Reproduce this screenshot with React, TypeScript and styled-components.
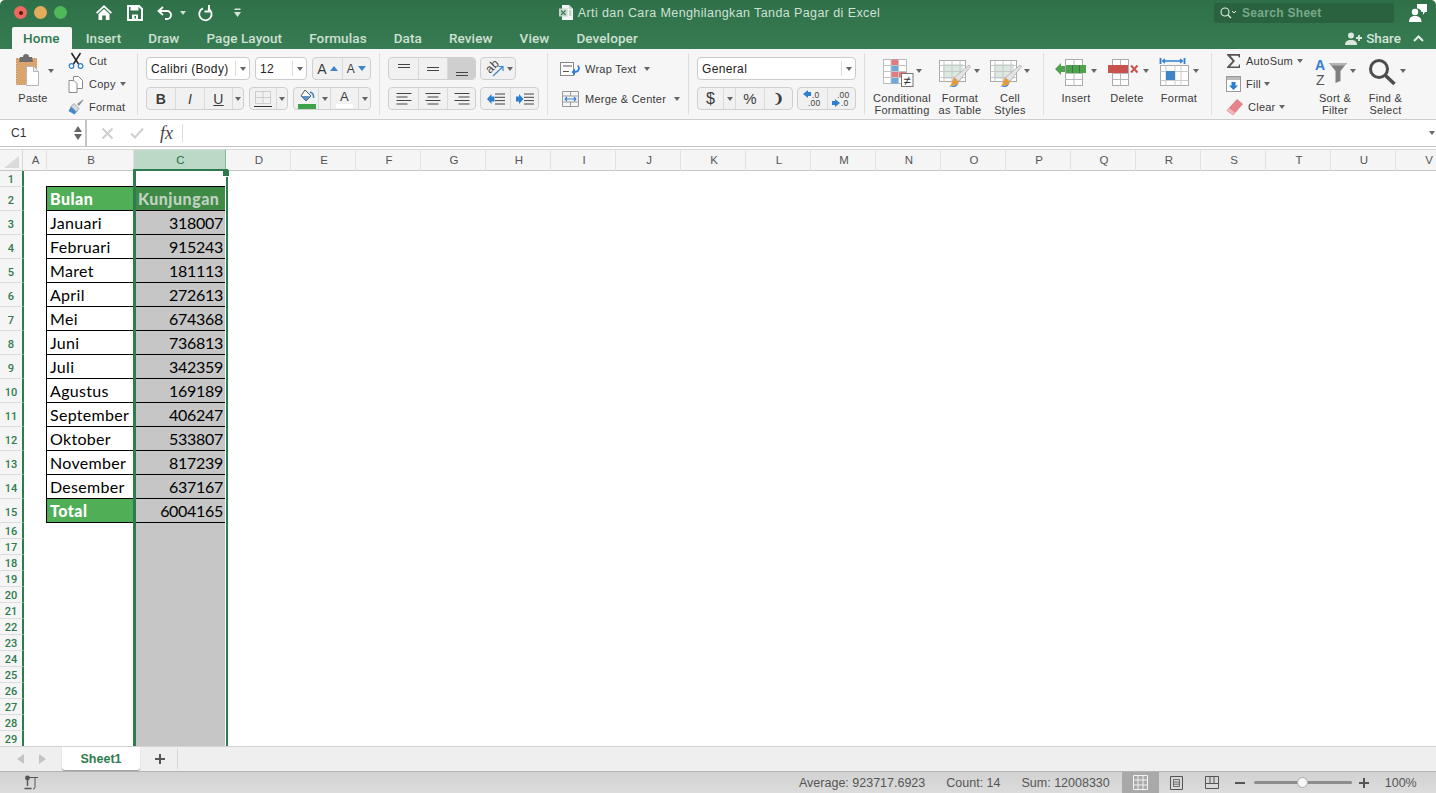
import React from 'react';
import styled, { createGlobalStyle } from 'styled-components';

const GlobalStyle = createGlobalStyle`
  html, body { margin: 0; padding: 0; background: #fff; overflow: hidden; }
  * { box-sizing: border-box; }
  body { font-family: "Liberation Sans", Arial, sans-serif; }
`;

const Page = styled.div`
  width: 1436px;
  height: 793px;
  display: flex;
  flex-direction: column;
  overflow: hidden;
`;

/* ---------- green header ---------- */

const Header = styled.header`
  height: 49px;
  background: linear-gradient(#2f7049, #377c52);
  border-radius: 5px 5px 0 0;
`;

const TitleRow = styled.div`
  height: 25px;
  display: grid;
  grid-template-columns: 1fr auto 1fr;
  align-items: center;
`;

const QuickBar = styled.div`
  display: flex;
  align-items: center;
  padding-left: 14px;
`;

const QuickGap = styled.span<{ $w: number }>`
  width: ${p => p.$w}px;
  flex: none;
`;

const Light = styled.span<{ $c: string }>`
  width: 13px;
  height: 13px;
  border-radius: 50%;
  margin-right: 7px;
  background: ${p => p.$c};
  display: flex;
  align-items: center;
  justify-content: center;
`;

const LightDot = styled.span`
  width: 4px;
  height: 4px;
  border-radius: 50%;
  background: #5a1512;
`;

const Title = styled.div`
  display: flex;
  align-items: center;
  gap: 5px;
  color: #cfe0d5;
  font-size: 12.5px;
  letter-spacing: 0.4px;
  padding-left: 3px;
`;

const TitleRight = styled.div`
  display: flex;
  justify-content: flex-end;
  align-items: center;
  padding-right: 9px;
`;

const SearchBox = styled.div`
  width: 180px;
  height: 20px;
  background: #2a6240;
  border-radius: 3px;
  display: flex;
  align-items: center;
  gap: 5px;
  padding-left: 6px;
  margin-right: 15px;
  color: #77a98a;
  font-size: 12px;
  font-weight: 700;
  letter-spacing: 0.3px;
`;

const TabRow = styled.nav`
  height: 24px;
  display: flex;
  align-items: flex-end;
  padding-left: 12px;
`;

const Tab = styled.div<{ $active?: boolean }>`
  height: 22px;
  padding: 0 ${p => (p.$active ? 12 : 13)}px 0 ${p => (p.$active ? 11 : 14)}px;
  display: flex;
  align-items: center;
  font-family: Roboto, sans-serif;
  font-size: 13.5px;
  font-weight: 500;
  letter-spacing: 0.1px;
  color: ${p => (p.$active ? '#2b7a4d' : '#cfe0d5')};
  background: ${p => (p.$active ? '#f6f6f6' : 'transparent')};
  border-radius: 2px 2px 0 0;
`;

const ShareBox = styled.div`
  margin-left: auto;
  height: 22px;
  display: flex;
  align-items: center;
  gap: 4px;
  padding-right: 12px;
  color: #d5e4da;
  font-family: Roboto, sans-serif;
  font-size: 13.5px;
  font-weight: 500;
`;

/* ---------- ribbon ---------- */

const Ribbon = styled.div`
  height: 71px;
  display: flex;
  background: #f6f6f6;
  border-bottom: 1px solid #cdcdcd;
  color: #3a3a3a;
  font-size: 11px;
  letter-spacing: 0.25px;
`;

const Divider = styled.div`
  width: 1px;
  height: 62px;
  margin-top: 4px;
  background: #dedede;
  flex: none;
`;

const Section = styled.section<{ $w: number; $pl?: number }>`
  width: ${p => p.$w}px;
  flex: none;
  display: flex;
  padding-left: ${p => p.$pl ?? 0}px;
`;

const Stack = styled.div`
  display: flex;
  flex-direction: column;
  gap: 7px;
  padding-top: 8px;
`;

const Line = styled.div<{ $gap?: number }>`
  display: flex;
  gap: ${p => p.$gap ?? 5}px;
  height: 23px;
`;

const Big = styled.div<{ $w: number }>`
  width: ${p => p.$w}px;
  flex: none;
  display: flex;
  flex-direction: column;
  align-items: center;
  text-align: center;
  line-height: 12px;
  white-space: nowrap;
`;

const PasteBox = styled.div`
  align-self: flex-start;
  height: 43px;
  padding-top: 5px;
`;

const BigIcon = styled.svg`
  display: block;
  flex: none;
  overflow: visible;
`;

const SmallList = styled.div<{ $w: number; $ml?: number }>`
  width: ${p => p.$w}px;
  margin-left: ${p => p.$ml ?? 0}px;
  flex: none;
  display: flex;
  flex-direction: column;
  gap: 7px;
  padding-top: 4px;
`;

const SmallRow = styled.div`
  height: 16px;
  display: flex;
  align-items: center;
  gap: 5px;
  white-space: nowrap;
`;

const Caret = styled.span<{ $ml?: number; $light?: boolean }>`
  width: 0;
  height: 0;
  flex: none;
  margin-left: ${p => p.$ml ?? 0}px;
  border-left: 3px solid transparent;
  border-right: 3px solid transparent;
  border-top: 4px solid ${p => (p.$light ? '#cfe0d5' : '#666')};
`;

const Select = styled.div<{ $w: number }>`
  width: ${p => p.$w}px;
  height: 23px;
  display: flex;
  align-items: center;
  background: #fff;
  border: 1px solid #cbcbcb;
  border-radius: 4px;
  font-size: 12px;
  letter-spacing: 0.35px;
  color: #222;
  padding-left: 4px;
`;

const SelectText = styled.span`
  flex: 1;
  white-space: nowrap;
`;

const SelectArrow = styled.span`
  width: 14px;
  height: 15px;
  border-left: 1px solid #ddd;
  display: flex;
  align-items: center;
  justify-content: center;
`;

const Group = styled.div`
  display: flex;
  height: 23px;
  border: 1px solid #cfcfcf;
  border-radius: 4px;
  background: #f1f1f1;
  overflow: hidden;
`;

const Btn = styled.div<{ $w: number; $on?: boolean }>`
  width: ${p => p.$w}px;
  flex: none;
  display: flex;
  align-items: center;
  justify-content: center;
  gap: 3px;
  color: #333;
  background: ${p => (p.$on ? '#cfcfcf' : 'transparent')};
  & + & { border-left: 1px solid #dadada; }
`;

const Glyph = styled.span<{ $s?: number; $b?: boolean; $i?: boolean; $u?: boolean }>`
  font-size: ${p => p.$s ?? 13}px;
  font-weight: ${p => (p.$b ? 700 : 400)};
  font-style: ${p => (p.$i ? 'italic' : 'normal')};
  text-decoration: ${p => (p.$u ? 'underline' : 'none')};
  line-height: 1;
  color: #3c3c3c;
`;

const ColorGlyph = styled.span`
  display: flex;
  flex-direction: column;
  align-items: center;
  gap: 1px;
`;

const ColorBar = styled.span`
  width: 17px;
  height: 4px;
  background: #fff;
`;

const TinyUp = styled.span<{ $down?: boolean }>`
  width: 0;
  height: 0;
  border-left: 4px solid transparent;
  border-right: 4px solid transparent;
  ${p => (p.$down ? 'border-top: 5px solid #3d85c6;' : 'border-bottom: 5px solid #3d85c6;')}
`;

const WrapList = styled.div`
  display: flex;
  flex-direction: column;
  gap: 14px;
  padding-top: 12px;
`;

const WrapRow = styled.div<{ $inset?: number; $gap?: number }>`
  display: flex;
  align-items: center;
  gap: ${p => p.$gap ?? 4}px;
  height: 16px;
  padding-left: ${p => p.$inset ?? 0}px;
  white-space: nowrap;
`;

/* ---------- formula bar ---------- */

const FormulaBar = styled.div`
  height: 27px;
  display: flex;
  align-items: center;
  background: #fff;
  border-bottom: 1px solid #c4c4c4;
  margin-bottom: 2px;
`;

const NameBox = styled.div`
  width: 87px;
  height: 26px;
  padding: 0 3px 0 11px;
  display: flex;
  align-items: center;
  justify-content: space-between;
  border-right: 2px solid #c4c4c4;
  font-size: 12px;
  color: #333;
`;

const Stepper = styled.div`
  display: flex;
  flex-direction: column;
  gap: 2px;
`;

const StepArrow = styled.span<{ $down?: boolean }>`
  width: 0;
  height: 0;
  border-left: 4px solid transparent;
  border-right: 4px solid transparent;
  ${p => (p.$down ? 'border-top: 6px solid #666;' : 'border-bottom: 6px solid #666;')}
`;

const FormulaTools = styled.div`
  width: 96px;
  height: 18px;
  display: flex;
  align-items: center;
  gap: 16px;
  padding-left: 14px;
  border-right: 1px solid #ddd;
`;

const Fx = styled.span`
  font-family: "Liberation Serif", serif;
  font-style: italic;
  font-size: 18px;
  color: #444;
`;

const FormulaInput = styled.div`
  flex: 1;
  display: flex;
  justify-content: flex-end;
  padding-right: 1px;
`;

/* ---------- sheet ---------- */

const Sheet = styled.div`
  height: 597px;
  display: grid;
  grid-template-columns: 23px 24px 87px 92px repeat(19, 65px);
  grid-template-rows: 22px 16px repeat(14, 24px) repeat(14, 16px);
  overflow: hidden;
  background: #fff;
  font-family: Lato, Carlito, sans-serif;
`;

const Corner = styled.div`
  background: #f5f5f5;
  border-top: 1px solid #d8d8d8;
  border-bottom: 1px solid #c8c8c8;
  border-right: 1px solid #d8d8d8;
  display: flex;
  align-items: flex-end;
  justify-content: center;
  padding-bottom: 2px;
`;

const ColHead = styled.div<{ $on?: boolean }>`
  background: ${p => (p.$on ? '#bcd9c8' : '#f5f5f5')};
  border-top: 1px solid #d8d8d8;
  border-bottom: 1px solid ${p => (p.$on ? '#2e7b4f' : '#c8c8c8')};
  border-right: 1px solid ${p => (p.$on ? '#7fbf96' : '#e2e2e2')};
  padding-left: 2px;
  display: flex;
  align-items: center;
  justify-content: center;
  font-family: "Liberation Sans", sans-serif;
  font-size: 11.5px;
  color: ${p => (p.$on ? '#1f6b41' : '#555')};
`;

const RowHead = styled.div<{ $r: number; $tall?: boolean }>`
  grid-column: 1;
  grid-row: ${p => p.$r};
  margin-right: -1px;
  position: relative;
  z-index: 1;
  background: #f5f5f5;
  border-bottom: 1px solid #dcdcdc;
  border-right: 2px solid #2e7b4f;
  display: flex;
  align-items: center;
  justify-content: center;
  padding-top: ${p => (p.$tall ? 4 : 1)}px;
  font-family: Roboto, sans-serif;
  font-weight: 500;
  font-size: 11px;
  color: #2e7b4f;
`;

const NameCell = styled.div<{ $r: number; $fill?: boolean; $top?: boolean }>`
  grid-column: 3;
  grid-row: ${p => p.$r};
  margin-left: -1px;
  margin-top: ${p => (p.$top ? -1 : 0)}px;
  border-left: 1px solid #000;
  border-bottom: 1px solid #000;
  border-top: ${p => (p.$top ? '1px solid #000' : 'none')};
  background: ${p => (p.$fill ? '#4fae56' : '#fff')};
  color: ${p => (p.$fill ? '#fff' : '#000')};
  font-weight: ${p => (p.$fill ? 900 : 400)};
  font-size: 16px;
  letter-spacing: ${p => (p.$fill ? '0.5px' : '0.3px')};
  padding-left: 3px;
  display: flex;
  align-items: center;
  white-space: nowrap;
`;

const ValueCell = styled.div<{ $r: number; $kind?: 'head' | 'line' | 'blank' | 'active' }>`
  grid-column: 4;
  grid-row: ${p => p.$r};
  margin: ${p => (p.$kind === 'head' ? '-1px' : '0')} 1px 0 0;
  background: ${p => (p.$kind === 'head' ? '#3f8a45' : p.$kind === 'active' ? '#fff' : '#c6c6c6')};
  color: ${p => (p.$kind === 'head' ? '#bfd2c1' : '#000')};
  font-weight: ${p => (p.$kind === 'head' ? 900 : 400)};
  border-bottom: ${p => (p.$kind === 'blank' || p.$kind === 'active' ? 'none' : '1px solid #000')};
  border-top: ${p => (p.$kind === 'head' ? '1px solid #000' : 'none')};
  font-size: 16px;
  letter-spacing: ${p => (p.$kind === 'head' ? '0.5px' : '-0.3px')};
  padding: 0 2px 0 4px;
  display: flex;
  align-items: center;
  justify-content: ${p => (p.$kind === 'head' ? 'flex-start' : 'flex-end')};
  white-space: nowrap;
`;

const SelectionFrame = styled.div`
  grid-column: 4;
  grid-row: 2 / 31;
  position: relative;
  z-index: 2;
  margin: -2px -2px 0 -1px;
  border: solid #2e7b4f;
  border-width: 2px 2px 0 3px;
  pointer-events: none;
`;

const FillHandle = styled.span`
  position: absolute;
  top: -1px;
  right: -3px;
  width: 6px;
  height: 7px;
  background: #2e7b4f;
  border-bottom: 1px solid #fff;
`;

/* ---------- tabs + status ---------- */

const SheetTabs = styled.div`
  height: 26px;
  display: flex;
  align-items: flex-start;
  background: #efefef;
  border-top: 1px solid #d2d2d2;
  border-bottom: 1px solid #b4b4b4;
`;

const NavArrows = styled.div`
  width: 62px;
  height: 24px;
  display: flex;
  align-items: center;
  gap: 15px;
  padding-left: 17px;
`;

const NavArrow = styled.span<{ $right?: boolean }>`
  width: 0;
  height: 0;
  border-top: 5px solid transparent;
  border-bottom: 5px solid transparent;
  ${p => (p.$right ? 'border-left: 7px solid #c4c4c4;' : 'border-right: 7px solid #c4c4c4;')}
`;

const SheetTab = styled.div`
  width: 78px;
  height: 23px;
  padding-top: 1px;
  background: #fff;
  border-radius: 0 0 3px 3px;
  box-shadow: 0 1px 1px #999;
  display: flex;
  align-items: center;
  justify-content: center;
  color: #2e7b4f;
  font-size: 12.5px;
  font-weight: 700;
`;

const AddSheet = styled.div`
  width: 38px;
  height: 21px;
  margin-top: 1px;
  padding-left: 2px;
  border-right: 1px solid #d8d8d8;
  display: flex;
  align-items: center;
  justify-content: center;
  color: #555;
`;

const StatusBar = styled.footer`
  height: 21px;
  display: flex;
  align-items: center;
  background: linear-gradient(#d2d2d2, #dcdcdc);
  font-size: 12.5px;
  color: #555;
  padding-left: 24px;
`;

const StatusText = styled.span<{ $ml?: number }>`
  margin-left: ${p => p.$ml ?? 0}px;
  white-space: nowrap;
`;

const ViewBtn = styled.div<{ $on?: boolean; $w: number; $mr?: number }>`
  width: ${p => p.$w}px;
  height: 21px;
  margin-right: ${p => p.$mr ?? 0}px;
  display: flex;
  align-items: center;
  justify-content: center;
  background: ${p => (p.$on ? '#a9a9a9' : 'transparent')};
`;

const Slider = styled.div`
  width: 98px;
  height: 3px;
  margin: 0 7px 0 9px;
  background: #8d8d8d;
  border-radius: 2px;
  display: flex;
  align-items: center;
  justify-content: center;
`;

const SliderThumb = styled.span`
  width: 11px;
  height: 11px;
  border-radius: 50%;
  background: #f7f7f7;
  border: 1px solid #aaa;
`;

/* ---------- icons ---------- */

const Svg = ({ w, h, children }: { w: number; h: number; children: React.ReactNode }) => (
  <BigIcon width={w} height={h} viewBox={`0 0 ${w} ${h}`}>{children}</BigIcon>
);

const DropTri = ({ x, y = 22 }: { x: number; y?: number }) => (
  <path d={`M${x - 3} ${y - 2}h6l-3 4z`} fill="#666" />
);

const HomeIcon = () => (
  <Svg w={18} h={17}>
    <path d="M9 1 1 8.500l1.200 1.200L9 3.400l6.800 6.300L17 8.500z" fill="#fff" />
    <path d="M3.500 10 9 5l5.500 5v6h-3.700v-4.500H7.200V16H3.500z" fill="#fff" />
  </Svg>
);

const SaveIcon = () => (
  <Svg w={16} h={16}>
    <path d="M1 1h11l3 3v11H1z" fill="none" stroke="#fff" strokeWidth="2" />
    <rect x="3.500" y="1.500" width="8" height="4" fill="#fff" />
    <rect x="5" y="9.500" width="6" height="5" fill="#fff" />
    <rect x="7.500" y="11" width="1.500" height="2.500" fill="#2f7049" />
  </Svg>
);

const UndoIcon = () => (
  <Svg w={16} h={14}>
    <path d="M6 1 1.500 5 6 9" fill="none" stroke="#fff" strokeWidth="1.800" />
    <path d="M2 5h8a4 4 0 0 1 0 8H8" fill="none" stroke="#fff" strokeWidth="1.800" />
  </Svg>
);

const RedoIcon = () => (
  <Svg w={16} h={16}>
    <path d="M5 3.400a6.200 6.200 0 1 0 5 .1" fill="none" stroke="#fff" strokeWidth="1.800" />
    <path d="M11 0v6.500H6.500" fill="none" stroke="#fff" strokeWidth="1.800" />
  </Svg>
);

const CustomizeIcon = () => (
  <Svg w={9} h={10}>
    <rect x="1.500" y="0.500" width="6" height="1.500" fill="#d5e4da" />
    <path d="M1 4h7L4.500 9z" fill="#d5e4da" />
  </Svg>
);

const ExcelDoc = () => (
  <Svg w={14} h={15}>
    <path d="M3 0h7l4 4v11H3z" fill="#f3f6f4" />
    <path d="M10 0v4h4z" fill="#c5d4ca" />
    <rect x="0" y="3.500" width="8.500" height="8" fill="#c7d6cc" />
    <path d="M2 5.500 6.500 10M6.500 5.500 2 10" stroke="#3f7f58" strokeWidth="1.200" />
    <path d="M10 6h2.500M10 8h2.500M10 10h2.500" stroke="#9db3a5" />
  </Svg>
);

const SearchIcon = () => (
  <Svg w={17} h={12}>
    <circle cx="5" cy="5" r="4" fill="none" stroke="#e3eee7" strokeWidth="1.100" />
    <path d="m8 8 3 3" stroke="#e3eee7" strokeWidth="1.200" />
    <path d="m12 4 2 2 2-2" fill="none" stroke="#e3eee7" />
  </Svg>
);

const CommentPerson = () => (
  <Svg w={18} h={18}>
    <path d="M8 0h10v8h-2l-2 3V8h-1.500A5 5 0 0 0 8 4.500z" fill="#fff" />
    <circle cx="6" cy="8" r="3.200" fill="#fff" />
    <path d="M0 18c0-4 2-6 6-6s6.500 2 6.500 6z" fill="#fff" />
  </Svg>
);

const ShareIcon = () => (
  <Svg w={17} h={13}>
    <circle cx="6" cy="3.500" r="3" fill="#dbe7df" />
    <path d="M0 13c0-3.500 2-5 6-5s6 1.500 6 5z" fill="#dbe7df" />
    <path d="M14 3v6M11 6h6" stroke="#dbe7df" strokeWidth="1.800" />
  </Svg>
);

const ChevronUp = () => (
  <Svg w={11} h={7}>
    <path d="m1 6 4.500-4.500L10 6" fill="none" stroke="#e6efe9" strokeWidth="2" />
  </Svg>
);

const PasteIcon = () => (
  <Svg w={44} h={34}>
    <rect x="2.500" y="4.500" width="20" height="26" fill="#d9a56c" stroke="#c98a4d" strokeDasharray="1.500 1" />
    <path d="M6 3h3a3 3 0 0 1 6 0h3l1 5H5z" fill="#6d6d6d" />
    <path d="M12.500 12.500h7l5 5v14h-12z" fill="#fff" stroke="#b5b5b5" />
    <path d="M19.500 12.500v5h5" fill="#eee" stroke="#b5b5b5" />
    <DropTri x={37} y={17} />
  </Svg>
);

const CutIcon = () => (
  <Svg w={16} h={16}>
    <path d="m3.500 0 7 11M12.500 0l-7 11" stroke="#222" strokeWidth="1.500" />
    <circle cx="3.500" cy="13" r="2.300" fill="none" stroke="#2f7fd0" strokeWidth="1.200" />
    <circle cx="12.500" cy="13" r="2.300" fill="none" stroke="#2f7fd0" strokeWidth="1.200" />
  </Svg>
);

const CopyIcon = () => (
  <Svg w={16} h={17}>
    <path d="M5.500.5h5l4 4v8h-9z" fill="#fff" stroke="#8a8a8a" />
    <path d="M1 4.500h5l3 3v9H1z" fill="#fff" stroke="#8a8a8a" />
  </Svg>
);

const BrushIcon = () => (
  <Svg w={16} h={16}>
    <path d="M9 5 15 .5l.5.5-4.500 6z" fill="#8a8f96" />
    <path d="M6 4.500 11 9.500 8.500 13 3 7.500z" fill="#d7dbe0" stroke="#77808a" strokeWidth=".6" />
    <path d="M3 7.500 8.500 13l-2 2.500L.5 12z" fill="#4a86c5" />
  </Svg>
);

const BorderIcon = () => (
  <Svg w={18} h={18}>
    <path d="M1.500 1.500h15v12h-15zM9 1.500v12M1.500 7.500h15" fill="none" stroke="#aaa" strokeDasharray="1 1" />
    <path d="M0 16.500h18" stroke="#333" strokeWidth="1.200" />
  </Svg>
);

const FillIcon = () => (
  <Svg w={19} h={20}>
    <path d="m8 1 6 6-5 5-5-5z" fill="#fff" stroke="#555" />
    <path d="M4 7h9l-4 5z" fill="#5d8fc4" />
    <path d="M13 3c3 1 4 3 3.500 6" fill="none" stroke="#3d85c6" strokeWidth="1.500" />
    <rect x="1" y="15" width="18" height="5" fill="#3fa14a" />
  </Svg>
);

const AlignV = ({ y }: { y: number }) => (
  <Svg w={16} h={16}>
    <path d={`M2 ${y}.5h12M2 ${y + 3}.5h12`} stroke="#444" strokeWidth="1" />
  </Svg>
);

const AlignH = ({ mode }: { mode: 'l' | 'c' | 'r' }) => {
  const rows = [15, 11, 15, 11];
  return (
    <Svg w={16} h={14}>
      {rows.map((w, i) => {
        const x = mode === 'l' ? 0.5 : mode === 'r' ? 15.5 - w : 8 - w / 2;
        return <path key={i} d={`M${x} ${1.5 + i * 3.5}h${w}`} stroke="#444" strokeWidth="1" />;
      })}
    </Svg>
  );
};

const OrientIcon = () => (
  <Svg w={20} h={20}>
    <text x="8.500" y="11" textAnchor="middle" fontSize="12" fill="#444" fontFamily="Liberation Sans" transform="rotate(-45 8.500 7.500)">ab</text>
    <path d="M9 17 19 7.500M14.500 7.500H19V12" fill="none" stroke="#3d85c6" strokeWidth="1.200" />
  </Svg>
);

const IndentIcon = ({ right }: { right?: boolean }) => (
  <Svg w={18} h={12}>
    <path d="M8 1h10M8 4.300h10M8 7.600h10M8 11h10" stroke="#444" />
    <path d={right ? 'M0 3.500h3V1l4.500 5L3 11V8.500H0z' : 'M7.500 3.500h-3V1L0 6l4.500 5V8.500h3z'} fill="#2f7fd0" />
  </Svg>
);

const WrapIcon = () => (
  <Svg w={21} h={14}>
    <rect x=".5" y=".5" width="13" height="13" fill="#fff" stroke="#888" />
    <path d="M3 4h9M3 9.500h6" stroke="#555" />
    <path d="M18 3.500c2 3 1 6.500-4 6.500" fill="none" stroke="#2f7fd0" strokeWidth="1.800" />
    <path d="m15 6.500-3.500 3.500 3.500 3.500z" fill="#2f7fd0" />
  </Svg>
);

const MergeIcon = () => (
  <Svg w={17} h={16}>
    <path d="M.5.500h16v15H.5zM.5 5h16M.5 11h16M8.500.500V5M8.500 11v4.500" fill="none" stroke="#999" />
    <path d="M3 8h11M5 6 3 8l2 2M12 6l2 2-2 2" fill="none" stroke="#2f7fd0" strokeWidth="1.100" />
  </Svg>
);

const DecIcon = ({ more }: { more?: boolean }) => (
  <Svg w={20} h={18}>
    <text x={more ? 9 : 5} y="8" fontSize="8.500" fill="#444" fontFamily="Liberation Sans">{more ? '.0' : '.00'}</text>
    <text x={more ? 5 : 9} y="16" fontSize="8.500" fill="#444" fontFamily="Liberation Sans">{more ? '.00' : '.0'}</text>
    {more
      ? <path d="M8 2h-3V0L0 4l5 4V6h3z" fill="#2f7fd0" />
      : <path d="M0 11h3V9l5 4-5 4v-2H0z" fill="#2f7fd0" />}
  </Svg>
);

const CondIcon = () => (
  <Svg w={74} h={43}>
    <rect x="18.500" y="10.500" width="23" height="24" fill="#fff" stroke="#bbb" />
    <rect x="26" y="10.500" width="7.500" height="6" fill="#e27a80" />
    <rect x="26" y="16.500" width="8" height="6" fill="#6fa8dc" />
    <rect x="26" y="22.500" width="15" height="6" fill="#e27a80" />
    <rect x="26" y="28.500" width="7.500" height="6" fill="#6fa8dc" />
    <path d="M18.500 16.500h23M18.500 22.500h23M18.500 28.500h23M26 10.500v24M33.500 10.500v24" stroke="#c4c4c4" fill="none" />
    <rect x="36.500" y="24.500" width="11.500" height="13" fill="#fff" stroke="#777" />
    <text x="42.250" y="35.500" textAnchor="middle" fontSize="13" fill="#333" fontFamily="Liberation Sans">≠</text>
    <DropTri x={54} />
  </Svg>
);

const TableBrush = ({ w, ox, caret }: { w: number; ox: number; caret: number }) => (
  <Svg w={w} h={43}>
    <rect x={ox + .5} y="11.500" width="26" height="21" fill="#fff" stroke="#aaa" />
    <rect x={ox + 4} y="15" width="20" height="15" fill="#dce9e0" />
    <path d={`M${ox + .5} 16.500h26M${ox + .5} 22.500h26M${ox + .5} 28.500h26M${ox + 5} 11.500v21M${ox + 13} 11.500v21M${ox + 21} 11.500v21`} stroke="#c8c8c8" fill="none" />
    <path d={`M${ox + 15} 29 L${ox + 30} 16 l1.500 1.500 L${ox + 20} 32z`} fill="#e4e4e4" stroke="#999" strokeWidth=".6" />
    <path d={`M${ox + 15} 28.500l5 4.500c-1 3-3 4-9 4 2-2 2-6 4-8.500z`} fill="#e59a3f" />
    <path d={`M${ox + 10} 37.500c3-.5 6 0 9-3-.500 2-2 3.500-4 3.500z`} fill="#2f7fd0" />
    <DropTri x={caret} />
  </Svg>
);

const InsertIcon = () => (
  <Svg w={52} h={43}>
    <rect x="15.500" y="10.500" width="17" height="26" fill="#fff" stroke="#aaa" />
    <path d="M15.500 16.500h17M15.500 24.500h17M15.500 30.500h17M24 10.500v26" stroke="#bbb" fill="none" />
    <rect x="16" y="16" width="20" height="8" fill="#4fa14f" />
    <path d="M5 20l6-6v3h4v6h-4v3z" fill="#4fa14f" />
    <path d="M22.500 16v8M29.500 16v8" stroke="#2f7f3a" />
    <DropTri x={44} />
  </Svg>
);

const DeleteIcon = () => (
  <Svg w={50} h={43}>
    <rect x="10.500" y="10.500" width="16" height="26" fill="#fff" stroke="#aaa" />
    <path d="M10.500 16.500h16M10.500 24.500h16M10.500 30.500h16M18.500 10.500v26" stroke="#bbb" fill="none" />
    <rect x="6" y="16" width="20" height="8" fill="#c8524d" />
    <path d="m29 16.500 6.500 7M35.500 16.500l-6.500 7" stroke="#c8524d" strokeWidth="2" />
    <DropTri x={44} />
  </Svg>
);

const FormatIcon = () => (
  <Svg w={52} h={43}>
    <path d="M7.500 9v6M31.500 9v6" stroke="#2f7fd0" strokeWidth="1.800" />
    <path d="M10 12h19M12 10l-2.500 2 2.500 2M27 10l2.500 2-2.500 2" fill="none" stroke="#2f7fd0" strokeWidth="1.300" />
    <rect x="7.500" y="16.500" width="28" height="20" fill="#fff" stroke="#aaa" />
    <path d="M7.500 22.500h28M7.500 31.500h28M13 16.500v20M22 16.500v20M28 16.500v20" stroke="#ccc" fill="none" />
    <rect x="13" y="22" width="9" height="9" fill="#3d85c6" />
    <DropTri x={43} />
  </Svg>
);

const SigmaIcon = () => (
  <Svg w={15} h={16}>
    <path d="M1 1h13v3.500h-1L12 2.800H4.500L9 8l-5 5.500h8.500L13 11.500h1V15H1v-1l5.500-6L1 2z" fill="#555" />
  </Svg>
);

const FillDownIcon = () => (
  <Svg w={15} h={16}>
    <rect x=".5" y=".5" width="14" height="15" fill="#fff" stroke="#999" />
    <rect x="1" y="1" width="13" height="3" fill="#bbb" />
    <path d="M5.500 6h4v3.500H12L7.500 14 3 9.500h2.500z" fill="#2f7fd0" />
  </Svg>
);

const EraserIcon = () => (
  <Svg w={17} h={17}>
    <path d="M11 .5 16.500 5 7 16 1 11.500z" fill="#e8838c" stroke="#c9646e" strokeWidth=".6" />
    <path d="M1 11.500 7 16l2-2.500L3 9z" fill="#f2b6bb" />
  </Svg>
);

const SortIcon = () => (
  <Svg w={50} h={43}>
    <text x="5" y="21" fontSize="14" fontWeight="700" fill="#2f7fd0" fontFamily="Liberation Sans">A</text>
    <text x="6" y="35.500" fontSize="14" fill="#555" fontFamily="Liberation Sans">Z</text>
    <path d="M19 14h18l-6.500 8v10l-5 2V22z" fill="#808080" />
    <path d="M19 14h18l-2 2.500H21z" fill="#b5b5b5" />
    <DropTri x={43} />
  </Svg>
);

const FindIcon = () => (
  <Svg w={50} h={43}>
    <circle cx="18" cy="20" r="8.500" fill="none" stroke="#4d4d4d" strokeWidth="3" />
    <path d="m24.500 26.500 9 8.500" stroke="#4d4d4d" strokeWidth="3.600" />
    <DropTri x={42} />
  </Svg>
);

const CrossIcon = () => (
  <Svg w={13} h={13}>
    <path d="m1.500 1.500 10 10M11.500 1.500l-10 10" stroke="#cfcfcf" strokeWidth="2" />
  </Svg>
);

const CheckIcon = () => (
  <Svg w={14} h={12}>
    <path d="m1 6.500 4 4L13 1.500" fill="none" stroke="#cfcfcf" strokeWidth="2" />
  </Svg>
);

const CornerTri = () => (
  <Svg w={15} h={12}>
    <path d="M15 0v12H0z" fill="#dadada" />
  </Svg>
);

const MacroIcon = () => (
  <Svg w={15} h={15}>
    <circle cx="3.500" cy="3" r="2.400" fill="#555" />
    <path d="M3.500 5v6M.5 13.500h7" stroke="#555" strokeWidth="1.400" />
    <path d="M3.500 2.500h7.500v9.500q0 2-2 2" fill="none" stroke="#555" />
    <path d="M9 2.500h5" stroke="#555" />
  </Svg>
);

const GridView = () => (
  <Svg w={15} h={15}>
    <path d="M.5.500h14v14H.5zM5 .5v14M10 .5v14M.5 5h14M.5 10h14" fill="#a9a9a9" stroke="#f2f2f2" />
  </Svg>
);

const PageView = () => (
  <Svg w={13} h={14}>
    <path d="M.5.500h12v13H.5z" fill="none" stroke="#555" />
    <path d="M3.500 3.500h6v7h-6zM3.500 6h6M3.500 8.200h6" fill="none" stroke="#555" strokeWidth=".8" />
  </Svg>
);

const BreakView = () => (
  <Svg w={14} h={13}>
    <path d="M.5.500h13v12H.5zM.5 7.500h13M5 .5v7M9 .5v7" fill="none" stroke="#555" />
  </Svg>
);

const PlusMinus = ({ plus }: { plus?: boolean }) => (
  <Svg w={10} h={10}>
    <path d={plus ? 'M5 0v10M0 5h10' : 'M0 5h10'} stroke="#555" strokeWidth="2" />
  </Svg>
);

/* ---------- data ---------- */

const COLUMNS = 'ABCDEFGHIJKLMNOPQRSTUV'.split('');

const VISITS: [string, number][] = [
  ['Januari', 318007],
  ['Februari', 915243],
  ['Maret', 181113],
  ['April', 272613],
  ['Mei', 674368],
  ['Juni', 736813],
  ['Juli', 342359],
  ['Agustus', 169189],
  ['September', 406247],
  ['Oktober', 533807],
  ['November', 817239],
  ['Desember', 637167],
];

const TABS = ['Insert', 'Draw', 'Page Layout', 'Formulas', 'Data', 'Review', 'View', 'Developer'];

const SheetGrid = () => {
  const rows: React.ReactNode[] = [];
  for (let n = 1; n <= 29; n++) {
    const idx = n - 3;
    const r = n + 1;
    rows.push(<RowHead key={`h${n}`} $r={r} $tall={n >= 2 && n <= 15}>{n}</RowHead>);
    if (n === 1) {
      rows.push(<ValueCell key="c1" $r={r} $kind="active" />);
    } else if (n === 2) {
      rows.push(<NameCell key="b2" $r={r} $fill $top>Bulan</NameCell>);
      rows.push(<ValueCell key="c2" $r={r} $kind="head">Kunjungan</ValueCell>);
    } else if (idx >= 0 && idx < VISITS.length) {
      rows.push(<NameCell key={`b${n}`} $r={r}>{VISITS[idx][0]}</NameCell>);
      rows.push(<ValueCell key={`c${n}`} $r={r} $kind="line">{VISITS[idx][1]}</ValueCell>);
    } else if (n === 15) {
      rows.push(<NameCell key="b15" $r={r} $fill>Total</NameCell>);
      rows.push(<ValueCell key="c15" $r={r} $kind="line">6004165</ValueCell>);
    } else {
      rows.push(<ValueCell key={`c${n}`} $r={r} $kind="blank" />);
    }
  }
  return (
    <Sheet>
      <Corner><CornerTri /></Corner>
      {COLUMNS.map(c => <ColHead key={c} $on={c === 'C'}>{c}</ColHead>)}
      {rows}
      <SelectionFrame><FillHandle /></SelectionFrame>
    </Sheet>
  );
};

const App: React.FC = () => (
  <Page>
    <GlobalStyle />
    <Header>
      <TitleRow>
        <QuickBar>
          <Light $c="#ec6a5e"><LightDot /></Light>
          <Light $c="#e5ad5b" />
          <Light $c="#4fb85a" />
          <QuickGap $w={21} />
          <HomeIcon />
          <QuickGap $w={14} />
          <SaveIcon />
          <QuickGap $w={14} />
          <UndoIcon />
          <QuickGap $w={7} />
          <Caret $light />
          <QuickGap $w={12} />
          <RedoIcon />
          <QuickGap $w={19} />
          <CustomizeIcon />
        </QuickBar>
        <Title><ExcelDoc />Arti dan Cara Menghilangkan Tanda Pagar di Excel</Title>
        <TitleRight>
          <SearchBox><SearchIcon />Search Sheet</SearchBox>
          <CommentPerson />
        </TitleRight>
      </TitleRow>
      <TabRow>
        <Tab $active>Home</Tab>
        {TABS.map(t => <Tab key={t}>{t}</Tab>)}
        <ShareBox><ShareIcon />Share<QuickGap $w={4} /><ChevronUp /></ShareBox>
      </TabRow>
    </Header>

    <Ribbon>
      <Section $w={137} $pl={14}>
        <Big $w={38}>
          <PasteBox><PasteIcon /></PasteBox>
          Paste
        </Big>
        <SmallList $w={80} $ml={16}>
          <SmallRow><CutIcon />Cut</SmallRow>
          <SmallRow><CopyIcon />Copy<Caret $ml={-1} /></SmallRow>
          <SmallRow><BrushIcon />Format</SmallRow>
        </SmallList>
      </Section>
      <Divider />
      <Section $w={241} $pl={8}>
        <Stack>
          <Line>
            <Select $w={104}><SelectText>Calibri (Body)</SelectText><SelectArrow><Caret /></SelectArrow></Select>
            <Select $w={52}><SelectText>12</SelectText><SelectArrow><Caret /></SelectArrow></Select>
            <Group>
              <Btn $w={29}><Glyph $s={14}>A</Glyph><TinyUp /></Btn>
              <Btn $w={28}><Glyph $s={12}>A</Glyph><TinyUp $down /></Btn>
            </Group>
          </Line>
          <Line>
            <Group>
              <Btn $w={28}><Glyph $b $s={14}>B</Glyph></Btn>
              <Btn $w={29}><Glyph $i $s={14}>I</Glyph></Btn>
              <Btn $w={28}><Glyph $u $s={14}>U</Glyph></Btn>
              <Btn $w={11}><Caret /></Btn>
            </Group>
            <Group>
              <Btn $w={26}><BorderIcon /></Btn>
              <Btn $w={11}><Caret /></Btn>
            </Group>
            <Group>
              <Btn $w={24}><FillIcon /></Btn>
              <Btn $w={12}><Caret /></Btn>
              <Btn $w={28}><ColorGlyph><Glyph $s={13}>A</Glyph><ColorBar /></ColorGlyph></Btn>
              <Btn $w={12}><Caret /></Btn>
            </Group>
          </Line>
        </Stack>
      </Section>
      <Divider />
      <Section $w={167} $pl={8}>
        <Stack>
          <Line $gap={4}>
            <Group>
              <Btn $w={29}><AlignV y={3} /></Btn>
              <Btn $w={29}><AlignV y={6} /></Btn>
              <Btn $w={28} $on><AlignV y={11} /></Btn>
            </Group>
            <Group>
              <Btn $w={34}><OrientIcon /><Caret /></Btn>
            </Group>
          </Line>
          <Line $gap={4}>
            <Group>
              <Btn $w={29}><AlignH mode="l" /></Btn>
              <Btn $w={29}><AlignH mode="c" /></Btn>
              <Btn $w={28}><AlignH mode="r" /></Btn>
            </Group>
            <Group>
              <Btn $w={29}><IndentIcon /></Btn>
              <Btn $w={28}><IndentIcon right /></Btn>
            </Group>
          </Line>
        </Stack>
      </Section>
      <Divider />
      <Section $w={140} $pl={12}>
        <WrapList>
          <WrapRow><WrapIcon />Wrap Text<Caret $ml={4} /></WrapRow>
          <WrapRow $inset={2} $gap={6}><MergeIcon />Merge &amp; Center<Caret $ml={2} /></WrapRow>
        </WrapList>
      </Section>
      <Divider />
      <Section $w={175} $pl={8}>
        <Stack>
          <Line>
            <Select $w={159}><SelectText>General</SelectText><SelectArrow><Caret /></SelectArrow></Select>
          </Line>
          <Line $gap={4}>
            <Group>
              <Btn $w={25}><Glyph $s={16}>$</Glyph></Btn>
              <Btn $w={12}><Caret /></Btn>
              <Btn $w={29}><Glyph $s={15}>%</Glyph></Btn>
              <Btn $w={28}><Glyph $s={13} $b>❩</Glyph></Btn>
            </Group>
            <Group>
              <Btn $w={29}><DecIcon more /></Btn>
              <Btn $w={28}><DecIcon /></Btn>
            </Group>
          </Line>
        </Stack>
      </Section>
      <Divider />
      <Section $w={178}>
        <Big $w={74}><CondIcon />Conditional<br />Formatting</Big>
        <Big $w={42}><TableBrush w={44} ox={1} caret={39} />Format<br />as Table</Big>
        <Big $w={58}><TableBrush w={56} ox={8} caret={45} />Cell<br />Styles</Big>
      </Section>
      <Divider />
      <Section $w={167} $pl={6}>
        <Big $w={52}><InsertIcon />Insert</Big>
        <Big $w={50}><DeleteIcon />Delete</Big>
        <Big $w={54}><FormatIcon />Format</Big>
      </Section>
      <Divider />
      <Section $w={224} $pl={14}>
        <SmallList $w={84}>
          <SmallRow><SigmaIcon />AutoSum<Caret $ml={-1} /></SmallRow>
          <SmallRow><FillDownIcon />Fill<Caret $ml={-2} /></SmallRow>
          <SmallRow><EraserIcon />Clear<Caret $ml={-2} /></SmallRow>
        </SmallList>
        <Big $w={50}><SortIcon />Sort &amp;<br />Filter</Big>
        <Big $w={51}><FindIcon />Find &amp;<br />Select</Big>
      </Section>
    </Ribbon>

    <FormulaBar>
      <NameBox>C1<Stepper><StepArrow /><StepArrow $down /></Stepper></NameBox>
      <FormulaTools><CrossIcon /><CheckIcon /><Fx>fx</Fx></FormulaTools>
      <FormulaInput><Caret /></FormulaInput>
    </FormulaBar>

    <SheetGrid />

    <SheetTabs>
      <NavArrows><NavArrow /><NavArrow $right /></NavArrows>
      <SheetTab>Sheet1</SheetTab>
      <AddSheet><PlusMinus plus /></AddSheet>
    </SheetTabs>

    <StatusBar>
      <MacroIcon />
      <StatusText $ml={760}>Average: 923717.6923</StatusText>
      <StatusText $ml={21}>Count: 14</StatusText>
      <StatusText $ml={21}>Sum: 12008330</StatusText>
      <QuickGap $w={12} />
      <ViewBtn $on $w={37}><GridView /></ViewBtn>
      <ViewBtn $w={35}><PageView /></ViewBtn>
      <ViewBtn $w={36} $mr={5}><BreakView /></ViewBtn>
      <PlusMinus />
      <Slider><SliderThumb /></Slider>
      <PlusMinus plus />
      <StatusText $ml={16}>100%</StatusText>
    </StatusBar>
  </Page>
);

export default App;
